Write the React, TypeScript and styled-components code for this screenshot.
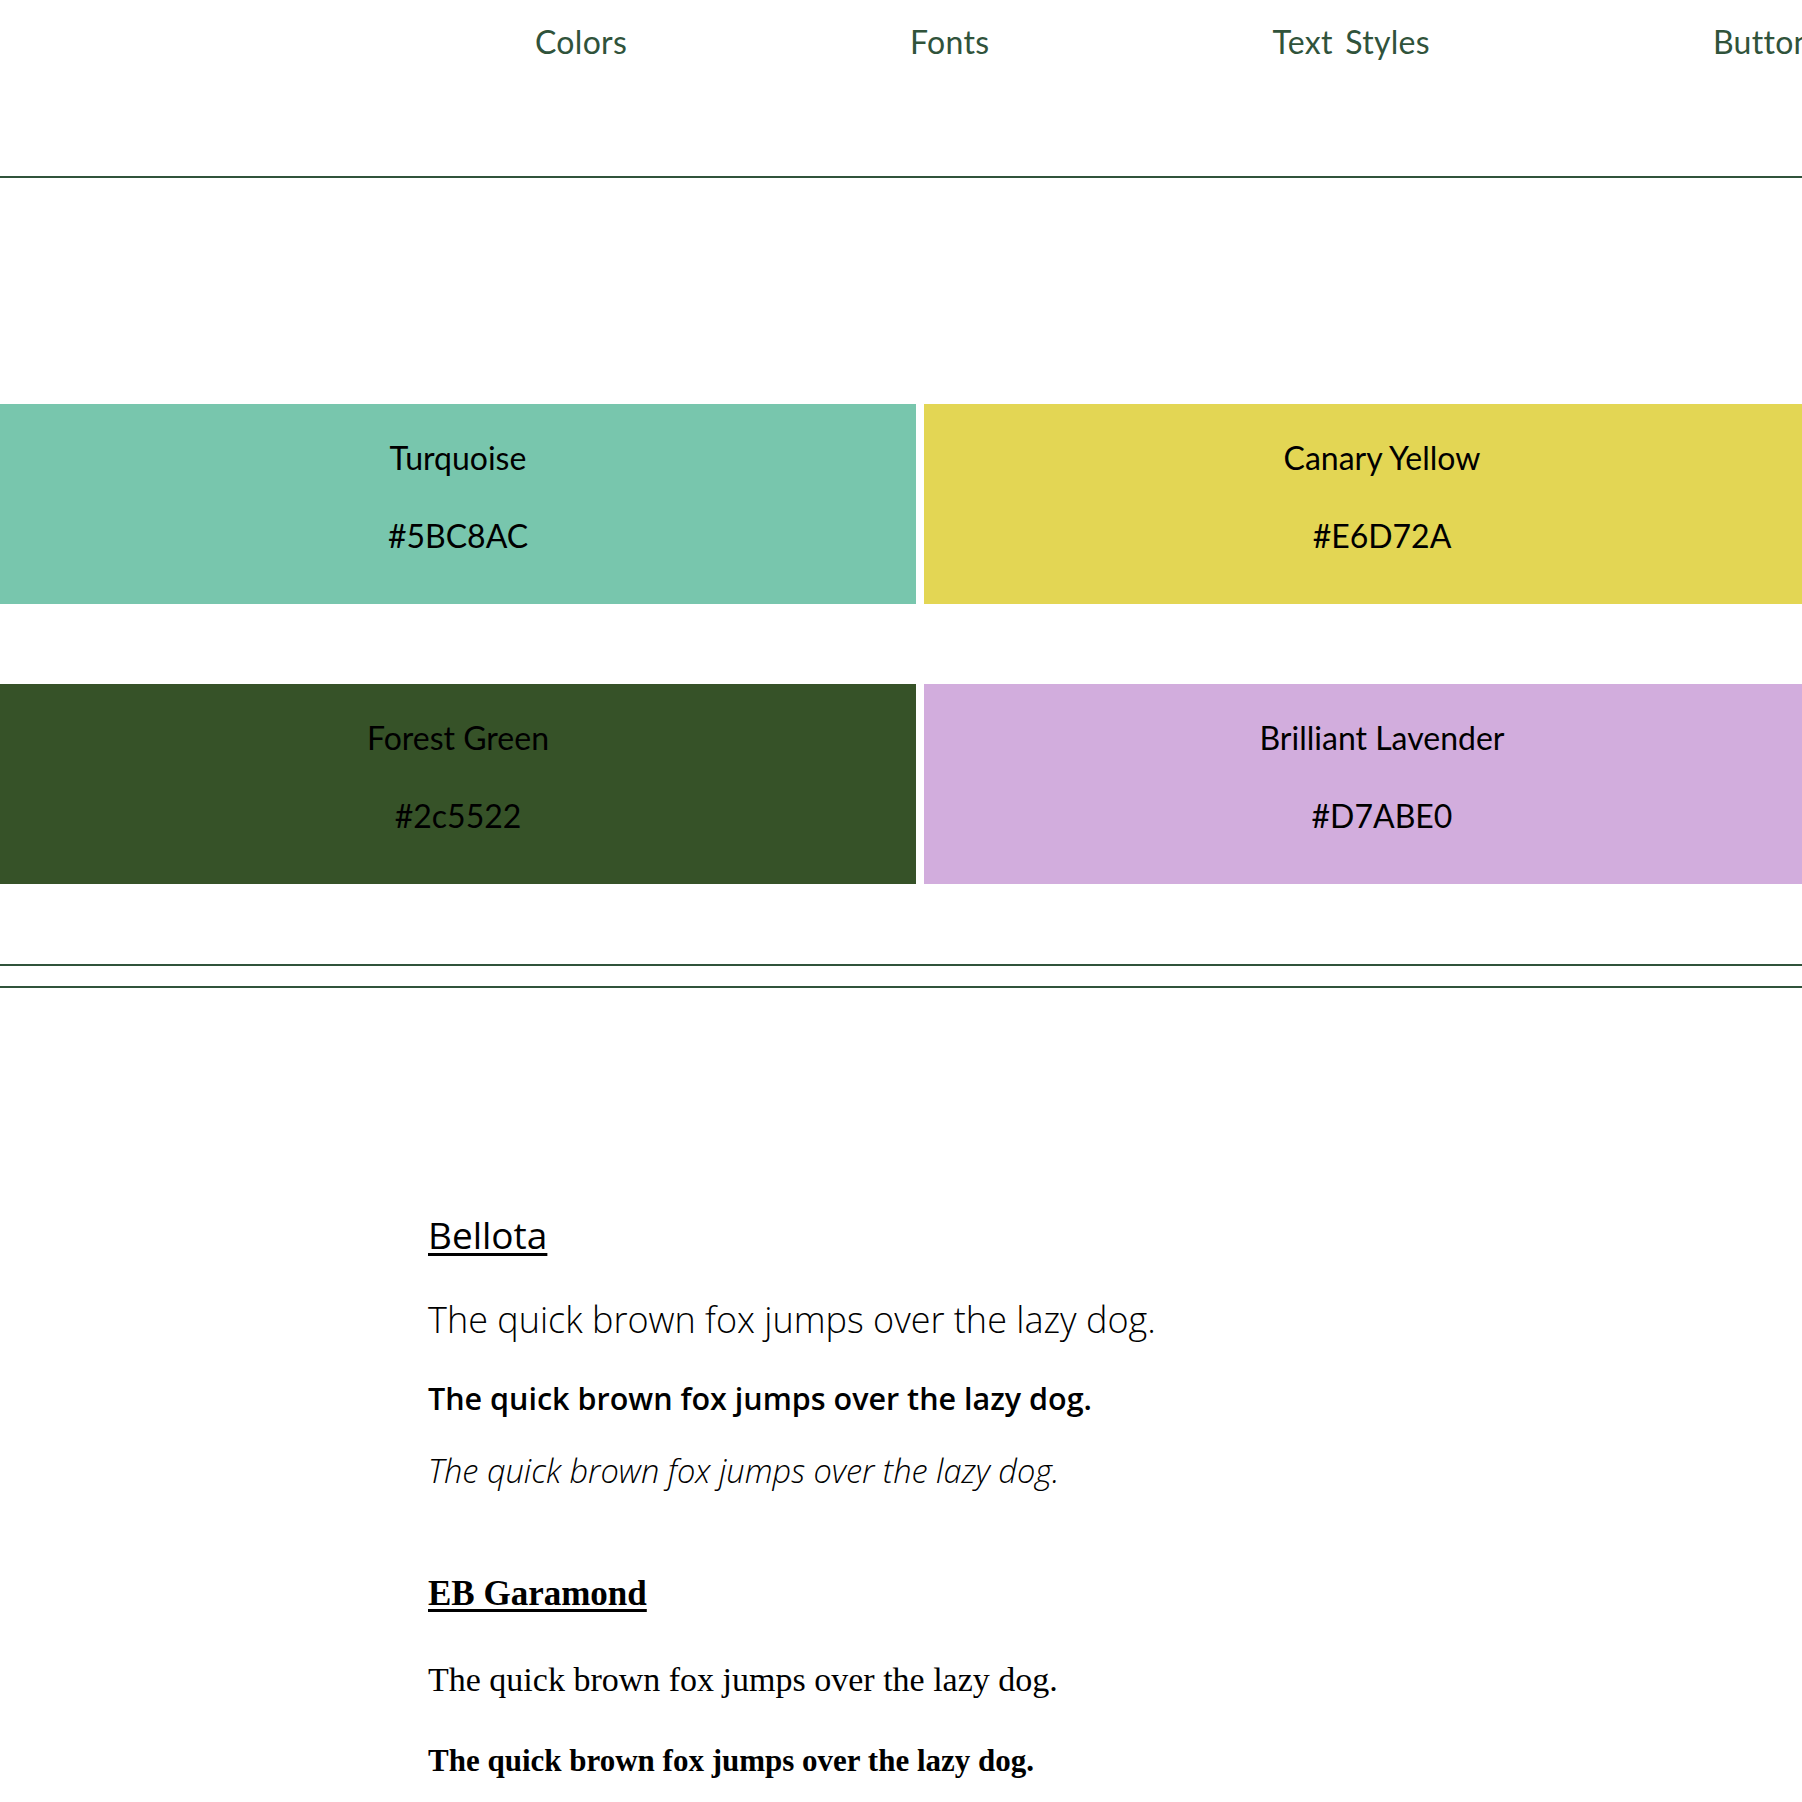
import styled, { createGlobalStyle } from 'styled-components';

const GlobalStyle = createGlobalStyle`
  html, body {
    margin: 0;
    padding: 0;
    background: #ffffff;
    overflow-x: hidden;
  }
  body {
    font-family: Lato, "Noto Sans", sans-serif;
  }
`;

const INK = '#30533b';

const Page = styled.div`
  width: 1840px;
`;

const Nav = styled.nav`
  height: 178px;
  box-sizing: border-box;
  padding: 23px 0 0 535px;
  display: flex;
  gap: 283px;
  border-bottom: 2px solid ${INK};
`;

const NavLink = styled.a`
  font-family: Lato, sans-serif;
  font-size: 32px;
  line-height: 1.2;
  letter-spacing: 0.3px;
  word-spacing: 4px;
  color: ${INK};
  text-decoration: none;
  white-space: nowrap;
`;

const ColorsSection = styled.section`
  padding: 226px 0 80px;
  border-bottom: 2px solid ${INK};
`;

const SwatchGrid = styled.div`
  display: grid;
  grid-template-columns: 916px 916px;
  column-gap: 8px;
  row-gap: 80px;
`;

const Swatch = styled.div<{ $bg: string }>`
  height: 200px;
  box-sizing: border-box;
  padding-top: 35px;
  background: ${(p) => p.$bg};
  display: flex;
  flex-direction: column;
  align-items: center;
  gap: 40px;
`;

const SwatchText = styled.span`
  font-family: Lato, sans-serif;
  font-size: 32px;
  line-height: 1.2;
  color: #000;
`;

const FontsSection = styled.section`
  margin-top: 20px;
  border-top: 2px solid ${INK};
  padding: 225px 0 120px 428px;
  display: flex;
  flex-direction: column;
  align-items: flex-start;
`;

const FontName = styled.h3<{ $family: string; $size: number; $bold?: boolean; $mt: number }>`
  margin: ${(p) => p.$mt}px 0 0;
  font-family: ${(p) => p.$family};
  font-size: ${(p) => p.$size}px;
  font-weight: ${(p) => (p.$bold ? 700 : 400)};
  line-height: 1.2;
  text-decoration: underline;
  text-decoration-thickness: 3px;
  text-underline-offset: 4px;
  color: #000;
`;

const Sample = styled.p<{
  $family: string;
  $size: number;
  $weight?: number;
  $italic?: boolean;
  $mt: number;
}>`
  margin: ${(p) => p.$mt}px 0 0;
  font-family: ${(p) => p.$family};
  font-size: ${(p) => p.$size}px;
  font-weight: ${(p) => p.$weight ?? 400};
  font-style: ${(p) => (p.$italic ? 'italic' : 'normal')};
  line-height: 1.2;
  color: #000;
  white-space: nowrap;
`;

const swatches = [
  { name: 'Turquoise', hex: '#5BC8AC', bg: '#78c6ad' },
  { name: 'Canary Yellow', hex: '#E6D72A', bg: '#e3d654' },
  { name: 'Forest Green', hex: '#2c5522', bg: '#365228' },
  { name: 'Brilliant Lavender', hex: '#D7ABE0', bg: '#d2addd' },
];

const PANGRAM = 'The quick brown fox jumps over the lazy dog.';
const BELLOTA = '"Open Sans", sans-serif';
const GARAMOND = '"Liberation Serif", serif';

export default function App() {
  return (
    <>
      <GlobalStyle />
      <Page>
        <Nav>
          <NavLink href="#colors">Colors</NavLink>
          <NavLink href="#fonts">Fonts</NavLink>
          <NavLink href="#text-styles">Text Styles</NavLink>
          <NavLink href="#buttons">Buttons</NavLink>
        </Nav>

        <ColorsSection id="colors">
          <SwatchGrid>
            {swatches.map((s) => (
              <Swatch key={s.name} $bg={s.bg}>
                <SwatchText>{s.name}</SwatchText>
                <SwatchText>{s.hex}</SwatchText>
              </Swatch>
            ))}
          </SwatchGrid>
        </ColorsSection>

        <FontsSection id="fonts">
          <FontName $family={BELLOTA} $size={37} $mt={0}>Bellota</FontName>
          <Sample $family={BELLOTA} $size={36} $weight={300} $mt={41}>{PANGRAM}</Sample>
          <Sample $family={BELLOTA} $size={30.5} $weight={600} $mt={38}>{PANGRAM}</Sample>
          <Sample $family={BELLOTA} $size={32.6} $weight={300} $italic $mt={35}>{PANGRAM}</Sample>

          <FontName $family={GARAMOND} $size={35} $bold $mt={83}>EB Garamond</FontName>
          <Sample $family={GARAMOND} $size={34} $mt={45}>{PANGRAM}</Sample>
          <Sample $family={GARAMOND} $size={31} $weight={700} $mt={41}>{PANGRAM}</Sample>
          <Sample $family={GARAMOND} $size={31} $italic $mt={40}>{PANGRAM}</Sample>
        </FontsSection>
      </Page>
    </>
  );
}
